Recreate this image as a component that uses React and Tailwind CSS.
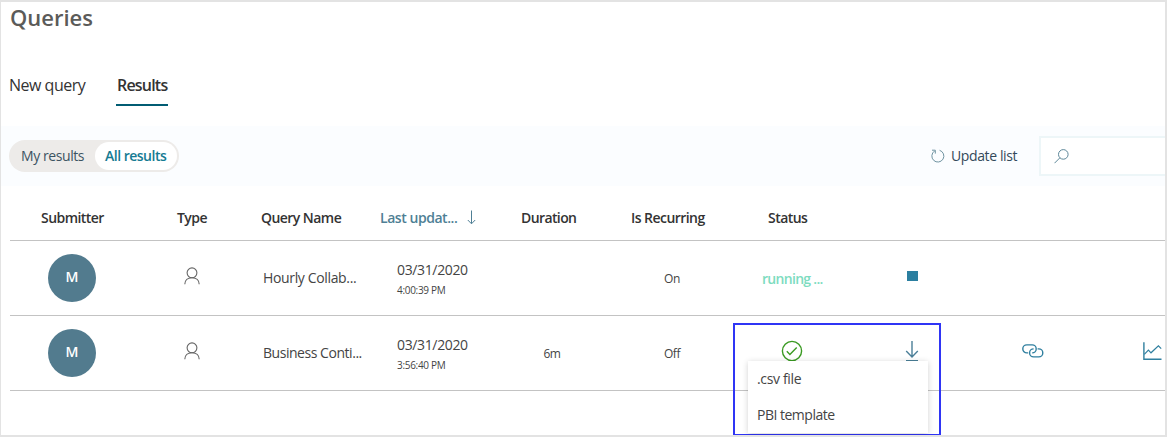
import React from "react";

const headers = [
  { label: "Submitter", cls: "pl-[31px] tracking-[-0.55px]" },
  { label: "Type", cls: "pl-[45px] tracking-[-0.55px]" },
  { label: "Query Name", cls: "pl-[9px] tracking-[-0.55px]" },
  { label: "Last updat...", cls: "pl-[8px] tracking-[-0.45px] text-[#4f7f95]", sorted: true },
  { label: "Duration", cls: "pl-[29px] tracking-[-0.6px]" },
  { label: "Is Recurring", cls: "pl-[19px] tracking-[-0.55px]" },
  { label: "Status", cls: "pl-[36px] tracking-[-0.55px]" },
];

function PersonIcon() {
  return (
    <svg width="16" height="18" viewBox="0 0 16 18" fill="none" stroke="#666" strokeWidth="1.1">
      <circle cx="8" cy="5.8" r="4.9" />
      <path d="M0.8 17.3c0-4 3-6.6 7.2-6.6s7.2 2.6 7.2 6.6" />
    </svg>
  );
}

function SortArrow() {
  return (
    <svg className="ml-[10px]" width="9" height="15" viewBox="0 0 9 15" fill="none" stroke="#4f7f95" strokeWidth="1">
      <path d="M4.5 0.5v13M0.8 10l3.7 3.8L8.2 10" />
    </svg>
  );
}

function RefreshIcon() {
  return (
    <svg width="14" height="14" viewBox="0 0 14 14" fill="none" stroke="#6f93a1" strokeWidth="1">
      <path d="M8.6 1.3A6 6 0 1 1 3.6 2" />
      <path d="M1 1.2h3.3v3.4" />
    </svg>
  );
}

function SearchIcon() {
  return (
    <svg width="15" height="15" viewBox="0 0 15 15" fill="none" stroke="#5d8799" strokeWidth="1">
      <circle cx="9.3" cy="5.4" r="4.8" />
      <path d="M5.8 8.9L.5 14.2" />
    </svg>
  );
}

function CheckIcon() {
  return (
    <svg width="22" height="22" viewBox="0 0 22 22" fill="none" stroke="#3a9a22" strokeWidth="1.4">
      <circle cx="11" cy="11" r="9.6" />
      <path d="M5.8 11.3l3.1 3.1 6.8-6.9" />
    </svg>
  );
}

function DownloadIcon() {
  return (
    <svg width="14" height="21" viewBox="0 0 14 21" fill="none" stroke="#4b7f98" strokeWidth="1.4">
      <path d="M7 0v15.5M1.2 10.1L7 15.9l5.8-5.8M1 19.6h12" />
    </svg>
  );
}

function LinkIcon() {
  return (
    <svg width="22" height="14" viewBox="0 0 22 14" fill="none" stroke="#2f7f9f" strokeWidth="1.4">
      <path d="M6.2 8.9H4.8a4 4 0 0 1 0-8h5.4a4 4 0 0 1 4 4c0 2.2-1.8 4-4 4" />
      <path d="M15.6 4.9h1.2a4 4 0 0 1 0 8h-5.2a4 4 0 0 1-4-4c0-2.2 1.8-4 4-4" />
    </svg>
  );
}

function ChartIcon() {
  return (
    <svg width="19" height="19" viewBox="0 0 19 19" fill="none" stroke="#2f7f9f">
      <path strokeWidth="1.4" d="M0.9 0.3v17h17.6" />
      <path strokeWidth="1.2" d="M1.3 12.3L5.4 8.2l2.6 2.6 7.4-7 2.8 2.8" />
    </svg>
  );
}

function Row({ name, nameCls, time, duration, recurring, children }) {
  return (
    <div className="ml-[9px] grid h-[75px] shrink-0 grid-cols-[122px_repeat(5,120px)_1fr] border-b border-[#c3c3c3] pb-px text-[#444]">
      <div className="pl-[38px] pt-[13px]">
        <div className="flex h-12 w-12 items-center justify-center rounded-full bg-[#527b8e] pb-[3px] text-[14px] font-semibold text-white">
          M
        </div>
      </div>
      <div className="flex justify-center pt-[26px]"><PersonIcon /></div>
      <div className={`pl-[11px] pt-[27px] text-[14px] leading-5 ${nameCls}`}>{name}</div>
      <div className="pl-[25px] pt-[19px]">
        <div className="text-[14px] leading-5 tracking-[-0.36px]">03/31/2020</div>
        <div className="text-[10px] leading-5 tracking-[-0.3px]">{time}</div>
      </div>
      <div className="pt-[28px] text-center text-[12px] leading-5 tracking-[-0.4px]">{duration}</div>
      <div className="pt-[28px] text-center text-[12px] leading-5 tracking-[-0.4px]">{recurring}</div>
      <div className="grid grid-cols-[repeat(4,120px)]">{children}</div>
    </div>
  );
}

export default function App() {
  return (
    <div className="relative flex h-[437px] w-[1167px] flex-col overflow-hidden border-y-2 border-l border-r-2 border-[#e3e3e3] bg-white font-['Open_Sans','Noto_Sans',sans-serif] whitespace-nowrap">
      <h1 className="shrink-0 pl-[9px] text-[22px] leading-[30px] font-semibold text-[#5b5b59]">Queries</h1>
      <nav className="mt-[41px] flex shrink-0 gap-[29px] pl-[8px] text-[16px] leading-6 text-[#333]">
        <span className="w-[78px] tracking-[-0.5px]">New query</span>
        <span className="h-[33px] w-[52px] border-b-2 border-[#015c73] pl-px font-semibold tracking-[-0.8px]">Results</span>
      </nav>
      <div className="mt-[20px] flex h-[60px] shrink-0 items-center bg-[#fbfdff] pl-2">
        <div className="flex h-8 w-[170px] items-center rounded-full bg-[#edebe9] text-[14px]">
          <span className="w-[86px] pb-px pl-[12px] tracking-[-0.42px] text-[#3c5362]">My results</span>
          <span className="flex h-7 w-[82px] items-center rounded-full bg-white pb-px pl-[10px] font-semibold tracking-[-0.5px] text-[#157b93]">All results</span>
        </div>
        <div className="ml-[752px] flex w-[108px] items-center text-[14px] tracking-[-0.38px] text-[#33495a]">
          <RefreshIcon />
          <span className="ml-[6px] pb-px">Update list</span>
        </div>
        <div className="flex h-10 flex-1 items-center border-2 border-r-0 border-[#edf6f8] bg-white pl-[13px]">
          <SearchIcon />
        </div>
      </div>
      <div className="ml-[9px] grid h-[55px] shrink-0 grid-cols-[122px_repeat(5,120px)_1fr] items-center border-b border-[#c3c3c3] pt-[9px] text-[14px] font-semibold text-[#333]">
        {headers.map((h) => (
          <div key={h.label} className={`flex items-center ${h.cls}`}>
            {h.label}
            {h.sorted && <SortArrow />}
          </div>
        ))}
      </div>
      <Row name="Hourly Collab..." nameCls="tracking-[-0.35px]" time="4:00:39 PM" duration="" recurring="On">
        <div className="pl-[30px] pt-[28px] text-[14px] leading-5 font-semibold tracking-[-0.7px] text-[#7ddcc0]">running ...</div>
        <div className="flex justify-center pt-[30px] pl-px"><span className="h-[10px] w-[11px] bg-[#2b7fa0]" /></div>
      </Row>
      <Row name="Business Conti..." nameCls="tracking-[-0.46px]" time="3:56:40 PM" duration="6m" recurring="Off">
        <div className="flex justify-center pt-[24px]"><CheckIcon /></div>
        <div className="flex justify-center pt-[25px]"><DownloadIcon /></div>
        <div className="flex justify-center pt-[28px] pl-[2px]"><LinkIcon /></div>
        <div className="pl-[51px] pt-[26px]"><ChartIcon /></div>
      </Row>
      <div className="absolute left-[732px] top-[321px] h-[112px] w-[208px] border-2 border-b border-[#2f35f5]" />
      <div className="absolute left-[747px] top-[359px] flex h-[72px] w-[180px] flex-col bg-white pl-[9px] text-[14px] leading-9 text-[#444] shadow-[0_1px_6px_rgba(0,0,0,0.18)]">
        <span className="tracking-[-0.35px]">.csv file</span>
        <span className="tracking-[-0.5px]">PBI template</span>
      </div>
    </div>
  );
}
